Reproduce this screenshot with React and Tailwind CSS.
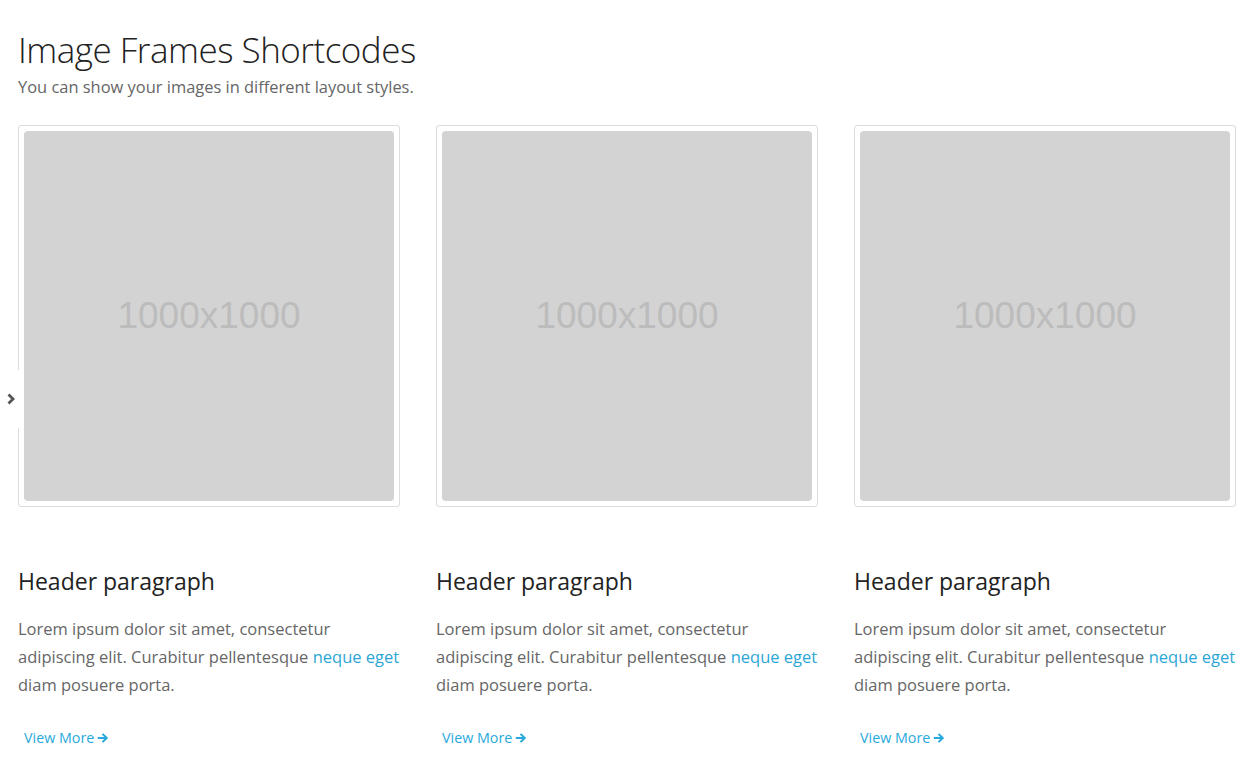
const cards = [0, 1, 2]

function ArrowRight() {
  return (
    <svg viewBox="0 0 12 12" className="w-[12px] h-[12px]" fill="currentColor">
      <path d="M6.2 1.2 L11.2 6 L6.2 10.8 L4.8 9.4 L7.2 7.1 H0.8 V4.9 H7.2 L4.8 2.6 Z" />
    </svg>
  )
}

function Frame() {
  return (
    <div className="border border-[#dcdcdc] rounded-[3px] p-[5px] bg-white">
      <div className="aspect-square bg-[#d3d3d3] rounded-[4px] flex items-center justify-center">
        <span className="text-[37px] text-[#bcbcbc] font-['Liberation_Sans',Arial,sans-serif]">1000x1000</span>
      </div>
    </div>
  )
}

export default function App() {
  return (
    <div className="relative min-h-[782px] bg-white font-['Open_Sans',sans-serif] px-[18px] pt-[28px]">
      <h1 className="text-[35px] font-light text-[#222] leading-[44px] tracking-[-0.5px]">Image Frames Shortcodes</h1>
      <p className="text-[16.45px] text-[#666] leading-[22px] mt-[4px]">You can show your images in different layout styles.</p>

      <div className="grid grid-cols-3 gap-x-[36px] mt-[27px]">
        {cards.map(i => (
          <div key={i}>
            <Frame />
            <h3 className="text-[23px] text-[#222] leading-[30px] mt-[59px]">Header paragraph</h3>
            <p className="text-[16.5px] text-[#666] leading-[28px] mt-[19px]">
              Lorem ipsum dolor sit amet, consectetur adipiscing elit. Curabitur pellentesque{' '}
              <a className="text-[#2ba6d6]">neque eget</a> diam posuere porta.
            </p>
            <a className="inline-flex items-center gap-[3px] text-[14.3px] text-[#29a9dc] mt-[28px] ml-[6px]">
              View More <ArrowRight />
            </a>
          </div>
        ))}
      </div>

      <div className="absolute left-0 top-[370px] w-[23px] h-[58px] bg-white flex items-center justify-center pr-[2px]">
        <svg viewBox="0 0 10 12" className="w-[10px] h-[12px] text-[#555]" fill="none" stroke="currentColor" strokeWidth="2.8" strokeLinejoin="miter">
          <path d="M2.5 1.5 L7 6 L2.5 10.5" />
        </svg>
      </div>
    </div>
  )
}
